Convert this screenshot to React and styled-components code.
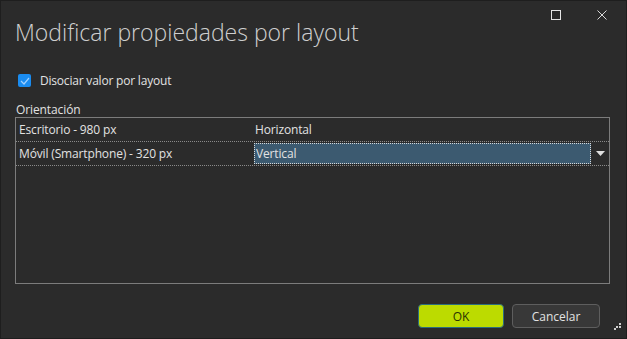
import React from 'react';
import styled, { createGlobalStyle } from 'styled-components';

const GlobalStyle = createGlobalStyle`
  html, body { margin: 0; padding: 0; background: #2b2b2b; }
  body { font-family: "Open Sans", "Noto Sans", sans-serif; }
`;

const Window = styled.div`
  position: relative;
  width: 627px;
  height: 339px;
  box-sizing: border-box;
  border: 1px solid #1e1e1e;
  background: #2b2b2b;
  color: #e2e2e2;
  display: flex;
  flex-direction: column;
  padding: 0 16px 0 14px;
`;

const TitleBar = styled.div`
  display: flex;
  align-items: flex-start;
  justify-content: space-between;
  height: 71px;
`;

const Title = styled.h1`
  margin: 15px 0 0 0;
  font-weight: 300;
  font-size: 23px;
  color: #cfcfcf;
`;

const Controls = styled.div`
  display: flex;
  gap: 36px;
  margin-top: 9px;
  margin-right: 3px;
`;

const CheckRow = styled.label`
  display: flex;
  align-items: center;
  gap: 9px;
  margin-left: 3px;
  font-size: 12px;
  letter-spacing: -0.2px;
`;

const Box = styled.span`
  width: 13px;
  height: 13px;
  border-radius: 2px;
  background: #1a8cf0;
  display: flex;
  align-items: center;
  justify-content: center;
`;

const GroupLabel = styled.div`
  margin-top: 14px;
  font-size: 12px;
  line-height: 14px;
  padding-left: 1px;
  letter-spacing: -0.1px;
`;

const Grid = styled.div`
  border: 1px solid #7c7c7c;
  height: 167px;
  box-sizing: border-box;
  font-size: 12px;
  letter-spacing: -0.15px;
`;

const Row = styled.div`
  display: grid;
  grid-template-columns: 238px 1fr 18px;
  height: 23px;
  align-items: stretch;
  border-bottom: 1px dotted #8a8a8a;
`;

const Cell = styled.div`
  display: flex;
  align-items: center;
  padding-left: ${p => p.$pad || 3}px;
`;

const Editor = styled.div`
  display: flex;
  align-items: center;
  background: #3c5a70;
  outline: 1px dotted #d8d8d8;
  outline-offset: -1px;
  padding-left: 2px;
  margin: 1px 0;
`;

const Arrow = styled.div`
  display: flex;
  align-items: center;
  justify-content: center;
`;

const Footer = styled.div`
  display: flex;
  justify-content: flex-end;
  gap: 8px;
  margin-top: 20px;
  margin-right: 10px;
`;

const Button = styled.button`
  width: ${p => p.$w}px;
  height: 24px;
  border-radius: 4px;
  font-family: "Open Sans", "Noto Sans", sans-serif;
  font-size: 12px;
  border: 1px solid ${p => (p.$primary ? '#2c6e7c' : '#5e5e5e')};
  background: ${p => (p.$primary ? '#bcdb00' : '#383838')};
  color: ${p => (p.$primary ? '#2a3300' : '#e2e2e2')};
  padding: 0;
`;

const Grip = styled.svg`
  position: absolute;
  right: 5px;
  bottom: 8px;
`;

export default function App() {
  return (
    <>
      <GlobalStyle />
      <Window>
        <TitleBar>
          <Title>Modificar propiedades por layout</Title>
          <Controls>
            <svg width="10" height="10" viewBox="0 0 10 10">
              <rect x="0.5" y="0.5" width="9" height="9" fill="none" stroke="#e6e6e6" strokeWidth="1" />
            </svg>
            <svg width="10" height="10" viewBox="0 0 10 10">
              <path d="M0.5 0.5 L9.5 9.5 M9.5 0.5 L0.5 9.5" stroke="#d8d8d8" strokeWidth="1" />
            </svg>
          </Controls>
        </TitleBar>
        <CheckRow>
          <Box>
            <svg width="10" height="8" viewBox="0 0 10 8">
              <path d="M1 4 L4 7 L9 1" fill="none" stroke="#9fd0ff" strokeWidth="1.2" />
            </svg>
          </Box>
          Disociar valor por layout
        </CheckRow>
        <GroupLabel>Orientación</GroupLabel>
        <Grid>
          <Row>
            <Cell>Escritorio - 980 px</Cell>
            <Cell $pad={1}>Horizontal</Cell>
            <Cell />
          </Row>
          <Row>
            <Cell>Móvil (Smartphone) - 320 px</Cell>
            <Editor>Vertical</Editor>
            <Arrow>
              <svg width="9" height="5" viewBox="0 0 9 5">
                <path d="M0 0 L9 0 L4.5 5 Z" fill="#e0e0e0" />
              </svg>
            </Arrow>
          </Row>
        </Grid>
        <Footer>
          <Button $primary $w={86}>OK</Button>
          <Button $w={88}>Cancelar</Button>
        </Footer>
        <Grip width="7" height="7" viewBox="0 0 7 7">
          <rect x="5" y="0" width="2" height="2" fill="#cfcfcf" />
          <rect x="2" y="3" width="2" height="2" fill="#cfcfcf" />
          <rect x="5" y="3" width="2" height="2" fill="#cfcfcf" />
          <rect x="0" y="5" width="2" height="2" fill="#cfcfcf" />
        </Grip>
      </Window>
    </>
  );
}
